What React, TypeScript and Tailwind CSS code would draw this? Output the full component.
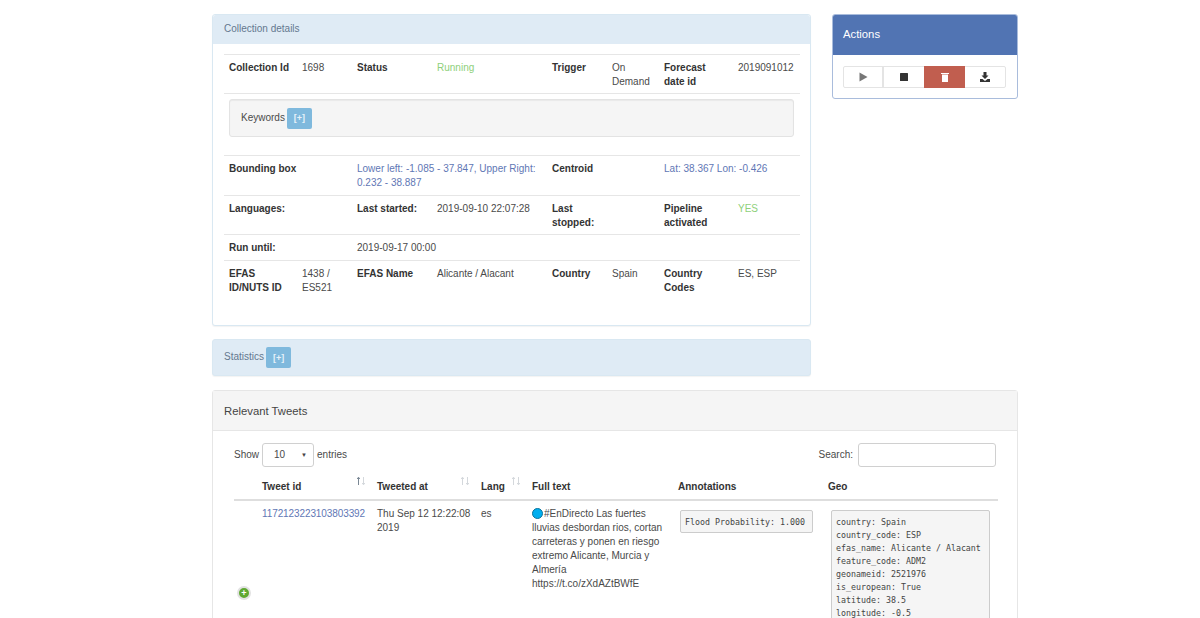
import React from "react";

const widths = [73, 55, 80, 115, 60, 52, 74, 67];

function Cols() {
  return (
    <colgroup>
      {widths.map((w, i) => (
        <col key={i} style={{ width: w }} />
      ))}
    </colgroup>
  );
}

function TH({ children, colSpan }: { children?: React.ReactNode; colSpan?: number }) {
  return (
    <th colSpan={colSpan} className="px-[5px] pt-[6px] pb-[4px] text-left align-top font-bold text-[#333] leading-[14px]">
      {children}
    </th>
  );
}

function TD({ children, colSpan, className = "" }: { children?: React.ReactNode; colSpan?: number; className?: string }) {
  return (
    <td colSpan={colSpan} className={`px-[5px] pt-[6px] align-top leading-[14px] ${className || "pb-[4px]"}`}>
      {children}
    </td>
  );
}

function Plus() {
  return (
    <span className="ml-[2px] inline-flex h-[21px] w-[25px] items-center justify-center rounded-[2px] bg-[#7fb9dd] align-middle text-[9px] font-bold text-[#e6f1f9]">
      [+]
    </span>
  );
}

function Sort({ up = false }: { up?: boolean }) {
  return (
    <svg width="10" height="10" viewBox="0 0 10 10" className="absolute right-[6px] top-[2px]">
      <path d="M2.5 9V1.5M1.2 3L2.5 1.2 3.8 3" fill="none" stroke={up ? "#7a8794" : "#d4d8dc"} strokeWidth="1" />
      <path d="M7.5 1v7.5M6.2 7L7.5 8.8 8.8 7" fill="none" stroke="#d4d8dc" strokeWidth="1" />
    </svg>
  );
}

const geo = [
  "country: Spain",
  "country_code: ESP",
  "efas_name: Alicante / Alacant",
  "feature_code: ADM2",
  "geonameid: 2521976",
  "is_european: True",
  "latitude: 38.5",
  "longitude: -0.5",
  "nuts2_id: 1438",
  "nuts2_source: ES521",
  "place: Alicante",
  "score: 0.97",
];

const thHead = "px-[5px] pt-[6px] pb-[5px] text-left font-bold text-[#333]";

export default function App() {
  return (
    <div className="h-[618px] overflow-hidden bg-white text-[10px] leading-[14px] text-[#4a4a4a]" style={{ fontFamily: '"Liberation Sans", Arial, sans-serif' }}>
      <div className="ml-[212px] w-[806px] pt-[14px]">
        <div className="flex items-start justify-between">
          <div className="w-[599px]">
            <section className="h-[312px] rounded-[3px] border border-[#d9e8f2] bg-white shadow-[0_1px_1px_rgba(0,0,0,0.05)]">
              <div className="flex h-[29px] items-center rounded-t-[3px] bg-[#dfebf5] pb-[1px] pl-[11px] text-[#64788f]">Collection details</div>
              <div className="px-[11px] pt-[10px]">
                <table className="w-[576px] table-fixed border-collapse">
                  <Cols />
                  <tbody>
                    <tr className="border-y border-[#e6e6e6]">
                      <TH>Collection Id</TH>
                      <TD>1698</TD>
                      <TH>Status</TH>
                      <TD className="pb-[4px] text-[#8ed07a]">Running</TD>
                      <TH>Trigger</TH>
                      <TD>On Demand</TD>
                      <TH>Forecast date id</TH>
                      <TD>2019091012</TD>
                    </tr>
                  </tbody>
                </table>
                <div className="mx-[5px] mt-[5px] mb-[18px] flex h-[38px] items-center rounded-[3px] border border-[#e3e3e3] bg-[#f5f5f5] pl-[11px] shadow-[inset_0_1px_1px_rgba(0,0,0,0.05)]">
                  Keywords
                  <Plus />
                </div>
                <table className="w-[576px] table-fixed border-collapse">
                  <Cols />
                  <tbody>
                    <tr className="border-y border-[#e6e6e6]">
                      <TH colSpan={2}>Bounding box</TH>
                      <TD colSpan={2} className="pb-[5px] text-[#5f77b5]">Lower left: -1.085 - 37.847, Upper Right: 0.232 - 38.887</TD>
                      <TH colSpan={2}>Centroid</TH>
                      <TD colSpan={2} className="pb-[4px] text-[#5f77b5]">Lat: 38.367 Lon: -0.426</TD>
                    </tr>
                    <tr className="border-b border-[#e6e6e6]">
                      <TH colSpan={2}>Languages:</TH>
                      <TH>Last started:</TH>
                      <TD>2019-09-10 22:07:28</TD>
                      <TH>Last stopped:</TH>
                      <TD />
                      <TH>Pipeline activated</TH>
                      <TD className="pb-[4px] text-[#8ed07a]">YES</TD>
                    </tr>
                    <tr className="border-b border-[#e6e6e6]">
                      <TH colSpan={2}>Run until:</TH>
                      <TD colSpan={6} className="pb-[5px]">2019-09-17 00:00</TD>
                    </tr>
                    <tr>
                      <TH>EFAS ID/NUTS ID</TH>
                      <TD>1438 / ES521</TD>
                      <TH>EFAS Name</TH>
                      <TD>Alicante / Alacant</TD>
                      <TH>Country</TH>
                      <TD>Spain</TD>
                      <TH>Country Codes</TH>
                      <TD>ES, ESP</TD>
                    </tr>
                  </tbody>
                </table>
              </div>
            </section>
            <section className="mt-[13px] flex h-[37px] items-center rounded-[3px] border border-[#d9e8f2] bg-[#dfebf5] pl-[11px] text-[#64788f] shadow-[0_1px_1px_rgba(0,0,0,0.05)]">
              <span className="mb-[2px]">Statistics</span>
              <Plus />
            </section>
          </div>
          <aside className="w-[186px] rounded-[3px] border border-[#a9bcdc]">
            <div className="flex h-[40px] items-center rounded-t-[2px] bg-[#5174b3] pb-[2px] pl-[10px] text-[11.3px] text-white">Actions</div>
            <div className="flex h-[43px] items-start px-[10px] pt-[11px]">
              <div className="flex h-[22px] w-[163px] rounded-[2px] border border-[#e4e4e4]">
                <div className="flex w-[40px] items-center justify-center border-r-2 border-[#e4e4e4]">
                  <svg width="9" height="10" viewBox="0 0 9 10"><path d="M0.5 0.5L8.5 5 0.5 9.5z" fill="#777" /></svg>
                </div>
                <div className="flex w-[40px] items-center justify-center">
                  <svg width="8" height="8" viewBox="0 0 8 8"><rect width="8" height="8" rx="0.5" fill="#333" /></svg>
                </div>
                <div className="-my-px flex w-[41px] items-center justify-center bg-[#c15e4f]">
                  <svg width="8" height="10" viewBox="0 0 8 10"><path d="M0 1h8v1H0zM1 2.6h6V10H1z" fill="#fff" /></svg>
                </div>
                <div className="flex flex-1 items-center justify-center">
                  <svg width="10" height="10" viewBox="0 0 10 10"><path d="M3.5 0h3v3.5H8.5L5 7 1.5 3.5h2zM0 7h2.5L5 9l2.5-2H10v3H0z" fill="#333" /></svg>
                </div>
              </div>
            </div>
          </aside>
        </div>
        <section className="mt-[14px] rounded-[3px] border border-[#e6e6e6]">
          <div className="flex h-[40px] items-center border-b border-[#e6e6e6] bg-[#f5f5f5] pl-[11px] text-[11.3px] text-[#444]">Relevant Tweets</div>
          <div className="pl-[21px] pr-[19px] pt-[12px]">
            <div className="flex h-[24px] items-center justify-between pr-[2px]">
              <div className="flex items-center">
                Show
                <div className="mx-[3px] flex h-[24px] w-[52px] items-center justify-between rounded-[3px] border border-[#d0d0d0] pl-[11px] pr-[6px]">
                  <span>10</span>
                  <span className="text-[6px] text-[#444]">▼</span>
                </div>
                entries
              </div>
              <div className="flex items-center">
                Search:
                <div className="ml-[5px] h-[24px] w-[138px] rounded-[3px] border border-[#d0d0d0]" />
              </div>
            </div>
            <table className="mt-[7px] w-[764px] table-fixed border-collapse">
              <colgroup>
                <col className="w-[23px]" />
                <col className="w-[115px]" />
                <col className="w-[104px]" />
                <col className="w-[51px]" />
                <col className="w-[146px]" />
                <col className="w-[150px]" />
                <col className="w-[175px]" />
              </colgroup>
              <thead>
                <tr className="border-b-2 border-[#dedede]">
                  <th />
                  <th className={`relative ${thHead}`}>Tweet id<Sort up /></th>
                  <th className={`relative ${thHead}`}>Tweeted at<Sort /></th>
                  <th className={`relative ${thHead}`}>Lang<Sort /></th>
                  <th className={thHead}>Full text</th>
                  <th className={thHead}>Annotations</th>
                  <th className={thHead}>Geo</th>
                </tr>
              </thead>
              <tbody>
                <tr>
                  <td className="align-middle">
                    <span className="ml-[3px] flex h-[14px] w-[14px] items-center justify-center rounded-full border-2 border-[#e2e2e2] bg-[#5fa832] text-[9px] font-bold leading-none text-white">+</span>
                  </td>
                  <TD className="pb-[4px] tracking-[-0.1px] text-[#5f77b5]">1172123223103803392</TD>
                  <TD>Thu Sep 12 12:22:08 2019</TD>
                  <TD>es</TD>
                  <TD>
                    <span className="mr-px inline-block h-[11px] w-[11px] rounded-full border border-[#08739c] bg-[#00aeef] align-[-2px]" />#EnDirecto Las fuertes lluvias desbordan rios, cortan carreteras y ponen en riesgo extremo Alicante, Murcia y Almería https://t.co/zXdAZtBWfE
                  </TD>
                  <td className="pt-[9px] pr-[5px] pl-[7px] align-top">
                    <pre className="w-[133px] rounded-[2px] border border-[#cccccc] bg-[#f5f5f5] px-[4px] pt-[5px] pb-[3px] leading-[13px] text-[#444]" style={{ fontFamily: '"DejaVu Sans Mono", monospace', fontSize: "8.3px" }}>Flood Probability: 1.000</pre>
                  </td>
                  <td className="pt-[9px] pr-[5px] pb-[9px] pl-[8px] align-top">
                    <pre className="w-[159px] rounded-[2px] border border-[#cccccc] bg-[#f5f5f5] px-[4px] pt-[5px] pb-[3px] leading-[13px] text-[#444]" style={{ fontFamily: '"DejaVu Sans Mono", monospace', fontSize: "8.3px" }}>{geo.join("\n")}</pre>
                  </td>
                </tr>
              </tbody>
            </table>
          </div>
        </section>
      </div>
    </div>
  );
}
